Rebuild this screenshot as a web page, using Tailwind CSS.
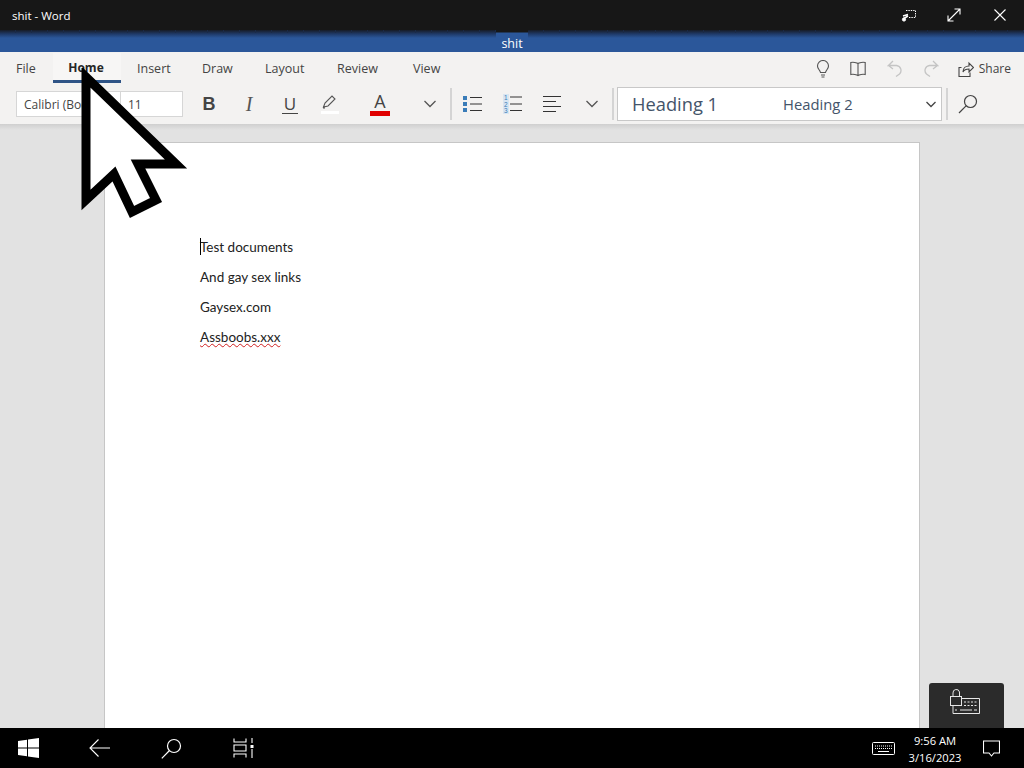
<!DOCTYPE html>
<html lang="en">
<head>
  <meta charset="UTF-8">
  <title>shit - Word</title>
  <script src="https://cdn.jsdelivr.net/npm/@tailwindcss/browser@4"></script>
</head>
<body class="w-[1024px] h-[768px] overflow-hidden relative font-['Open_Sans',sans-serif] bg-[#e2e2e2]">
<div class="flex flex-col h-[768px]">
  <!-- title bar -->
  <div class="h-[30px] shrink-0 bg-[#171717] flex items-center pl-[12px] text-white">
    <span class="text-[11.5px] leading-none pt-[1px]">shit - Word</span>
    <div class="ml-auto flex items-center">
      <svg class="w-[16px] h-[16px] mr-[30px]" viewBox="0 0 16 16" fill="none" stroke="#fff"><path d="M5 3.500h9.500v7H8" stroke-dasharray="1.400 1"/><path d="M2 9l5-1.500M2 12l5-3" stroke-width="1.500"/><circle cx="3" cy="12.500" r="1.600" fill="#fff"/></svg>
      <svg class="w-[14px] h-[14px] mr-[33px]" viewBox="0 0 14 14" fill="none" stroke="#fff" stroke-width="1.100"><path d="M1 13L13 1M7.500 1H13V6.500M1 7.500V13H6.500"/></svg>
      <svg class="w-[12px] h-[12px] mr-[18px]" viewBox="0 0 12 12" fill="none" stroke="#fff" stroke-width="1.100"><path d="M.5.5l11 11M11.500.5l-11 11"/></svg>
    </div>
  </div>
  <!-- doc name strip -->
  <div class="h-[22px] shrink-0 flex">
    <div class="flex-1 bg-[repeating-linear-gradient(90deg,transparent_0,transparent_15px,#1a2a47_15px,#1a2a47_16px),linear-gradient(#171c26_0px,#1f3a68_4px,#2b579a_8px)] bg-[length:auto_3px,auto] bg-no-repeat"></div>
    <div class="w-[32px] bg-[linear-gradient(#171717_2px,#2b579a_3px)] flex justify-center items-end">
      <span class="text-[12.5px] leading-[17px] text-white">shit</span>
    </div>
    <div class="flex-1 bg-[repeating-linear-gradient(90deg,transparent_0,transparent_15px,#1a2a47_15px,#1a2a47_16px),linear-gradient(#171c26_0px,#1f3a68_4px,#2b579a_8px)] bg-[length:auto_3px,auto] bg-no-repeat"></div>
  </div>
  <!-- tabs -->
  <div class="h-[32px] shrink-0 bg-[#f3f2f1] flex items-stretch text-[12.5px] text-[#444] relative">
    <div class="flex items-center pl-[16px] pt-[2px]">
      <span class="w-[37px]">File</span>
      <span class="w-[68px] h-full -mt-[2px] flex items-center justify-center font-bold text-[#262626] text-[12px] bg-[#f7f6f5] border-b-[3px] border-[#2f5486] pt-[3px] pr-[2px]">Home</span>
      <span class="ml-[16px] w-[52px]">Insert</span>
      <span class="ml-[13px] w-[47px]">Draw</span>
      <span class="ml-[16px] w-[58px]">Layout</span>
      <span class="ml-[14px] w-[62px]">Review</span>
      <span class="ml-[14px]">View</span>
    </div>
    <div class="ml-auto flex items-center pr-[13px] pt-[1px]">
      <svg class="w-[16px] h-[18px] mr-[19px]" viewBox="0 0 16 18" fill="none" stroke="#555" stroke-width="1.100"><path d="M5.500 12.500C5 10 2.500 9 2.500 6a5.500 5.500 0 0 1 11 0c0 3-2.500 4-3 6.500zM6 15h4M6.500 17h3"/></svg>
      <svg class="w-[16px] h-[16px] mr-[21px]" viewBox="0 0 16 16" fill="none" stroke="#555" stroke-width="1.100"><path d="M8 2.500C7 1.500 3 1 .8 1.500v12C3 13 7 13.500 8 14.500c1-1 5-1.500 7.200-1V1.500C13 1 9 1.500 8 2.500zM8 2.500v12"/></svg>
      <svg class="w-[16px] h-[17px] mr-[20px]" viewBox="0 0 16 17" fill="none" stroke="#c4c4c4" stroke-width="1.300"><path d="M6 1L1.500 5.500h8a5 5 0 0 1 3 8.500L9 16.500M1.500 5.500L6 9"/></svg>
      <svg class="w-[16px] h-[17px] mr-[19px]" viewBox="0 0 16 17" fill="none" stroke="#c4c4c4" stroke-width="1.300"><path d="M10 1l4.500 4.500h-8a5 5 0 0 0-3 8.500L7 16.500M14.500 5.500L10 9"/></svg>
      <svg class="w-[16px] h-[16px] mr-[5px]" viewBox="0 0 16 16" fill="none" stroke="#444" stroke-width="1.100"><path d="M3.500 6.500H1v9h11v-4M5 11c0-4 3-6 6-6V2l4.500 4.500L11 11V8c-3 0-5 1-6 3z"/></svg>
      <span class="text-[12px]">Share</span>
    </div>
  </div>
  <!-- toolbar -->
  <div class="h-[40px] shrink-0 bg-[#f3f2f1] flex items-center pl-[16px]">
    <div class="w-[105px] h-[26px] bg-white border border-[#d6d6d6] text-[12px] text-[#444] pl-[7px] leading-[25px] overflow-hidden whitespace-nowrap">Calibri (Body)</div>
    <div class="w-[62px] h-[26px] bg-white border border-l-0 border-[#d6d6d6] text-[12px] text-[#444] pl-[7px] leading-[25px]">11</div>
    <span class="ml-[19px] w-[14px] text-center font-bold text-[18px] text-[#444] leading-none font-['Liberation_Sans',sans-serif]">B</span>
    <span class="ml-[26px] w-[14px] text-center text-[20px] text-[#555] leading-none font-['Liberation_Serif',serif] italic">I</span>
    <span class="ml-[26px] w-[16px] text-center text-[17px] text-[#444] leading-[19px] border-b border-[#444]">U</span>
    <svg class="ml-[23px] w-[18px] h-[20px]" viewBox="0 0 18 20" fill="none" stroke="#555" stroke-width="1.100"><path d="M2.500 13l1.500-4L11 2l3 3-7 7zM2 14l2 0"/><rect x="0" y="17" width="18" height="3" fill="#fff" stroke="none"/></svg>
    <div class="ml-[31px] w-[20px] flex flex-col items-center">
      <span class="text-[18px] leading-[17px] text-[#444]">A</span>
      <span class="w-[20px] h-[5px] bg-[#e00000] mt-[1px]"></span>
    </div>
    <svg class="ml-[34px] w-[12px] h-[8px]" viewBox="0 0 12 8" fill="none" stroke="#555" stroke-width="1.300"><path d="M.5 1l5.500 5.500L11.500 1"/></svg>
    <div class="ml-[14px] w-[2px] h-[32px] bg-[#d4d4d4]"></div>
    <!-- bullets -->
    <svg class="ml-[11px] w-[19px] h-[18px]" viewBox="0 0 19 18"><g fill="#3a7cb8"><rect y="1" width="4" height="4"/><rect y="7" width="4" height="4"/><rect y="13" width="4" height="4"/></g><path d="M7 2.500h12M7 9h12M7 15.500h12" stroke="#333" stroke-width="1"/></svg>
    <svg class="ml-[21px] w-[19px] h-[20px]" viewBox="0 0 19 20"><rect width="6" height="20" fill="#d9e6f2"/><path d="M7 3h12M7 10h12M7 16.500h12" stroke="#333" stroke-width="1"/><text x="1" y="6" font-size="6.500" fill="#3a7cb8" font-family="Liberation Sans">1</text><text x="1" y="12.500" font-size="6.500" fill="#3a7cb8" font-family="Liberation Sans">2</text><text x="1" y="19" font-size="6.500" fill="#3a7cb8" font-family="Liberation Sans">3</text></svg>
    <svg class="ml-[21px] w-[18px] h-[18px]" viewBox="0 0 18 18"><path d="M0 1.500h18M0 6.500h13M0 11.500h18M0 16.500h13" stroke="#333" stroke-width="1"/></svg>
    <svg class="ml-[25px] w-[12px] h-[8px]" viewBox="0 0 12 8" fill="none" stroke="#555" stroke-width="1.300"><path d="M.5 1l5.500 5.500L11.500 1"/></svg>
    <div class="ml-[14px] w-[2px] h-[32px] bg-[#d4d4d4]"></div>
    <!-- styles gallery -->
    <div class="ml-[3px] w-[325px] h-[34px] bg-white border border-[#c8c8c8] flex items-center text-[#44546a]">
      <span class="ml-[14px] text-[18.300px] leading-none">Heading 1</span>
      <span class="ml-[65px] text-[14.800px] leading-none">Heading 2</span>
      <svg class="ml-auto mr-[5px] w-[10px] h-[7px]" viewBox="0 0 10 7" fill="none" stroke="#444" stroke-width="1.300"><path d="M.5 1L5 5.500 9.500 1"/></svg>
    </div>
    <div class="ml-[4px] w-[2px] h-[32px] bg-[#d4d4d4]"></div>
    <svg class="ml-[10px] w-[20px] h-[20px]" viewBox="0 0 20 20" fill="none" stroke="#444" stroke-width="1.200"><circle cx="12.500" cy="7.500" r="6"/><path d="M8.300 11.700L1 19"/></svg>
  </div>
  <!-- ribbon shadow -->
  <div class="h-[6px] shrink-0 bg-[linear-gradient(#cfcfcf,#e2e2e2)]"></div>
  <!-- canvas -->
  <div class="flex-1 min-h-0 bg-[#e2e2e2] pl-[104px] pt-[12px] overflow-hidden">
    <div class="w-[816px] h-[700px] bg-white border border-[#c6c6c6] pl-[95px] pt-[94px] text-[13.500px] leading-[20px] text-[#222] font-['Lato',sans-serif]">
      <div class="relative mb-[10px]">Test documents<span class="absolute left-0 top-[1px] w-px h-[17px] bg-black"></span></div>
      <div class="mb-[10px]">And gay sex links</div>
      <div class="mb-[10px]">Gaysex.com</div>
      <div><span class="underline decoration-wavy decoration-[#d02020] decoration-1">Assboobs.xxx</span></div>
    </div>
  </div>
  <!-- taskbar -->
  <div class="h-[40px] shrink-0 bg-black flex items-center text-white relative">
    <svg class="ml-[18px] w-[21px] h-[20px]" viewBox="0 0 21 20" fill="#fff"><path d="M0 3l9-1.300V9.500H0zM10 1.500L21 0v9.500H10zM0 10.500h9v7.800L0 17zM10 10.500h11V20l-11-1.500z"/></svg>
    <svg class="ml-[50px] w-[21px] h-[18px]" viewBox="0 0 21 18" fill="none" stroke="#fff" stroke-width="1.100"><path d="M21 9H1M9.500.5L1 9l8.500 8.500"/></svg>
    <svg class="ml-[51px] w-[21px] h-[21px]" viewBox="0 0 21 21" fill="none" stroke="#fff" stroke-width="1.200"><circle cx="13" cy="8" r="6.500"/><path d="M8.500 12.500L.8 20.300"/></svg>
    <svg class="ml-[51px] w-[21px] h-[20px]" viewBox="0 0 21 20" fill="none" stroke="#fff" stroke-width="1.100"><path d="M1 .5v3.500h12V.5M1 19.500V16h12v3.500M1 7h12v6H1zM19 0v5M19 11v9"/><rect x="17.500" y="7" width="3" height="3" fill="#fff" stroke="none"/></svg>
    <svg class="ml-[618px] w-[23px] h-[13px]" viewBox="0 0 23 13" fill="none" stroke="#fff"><rect x=".5" y=".5" width="22" height="12" rx="1"/><path d="M3 4h17M3 6.500h17" stroke-dasharray="1 1"/><path d="M6 9.500h11"/></svg>
    <div class="ml-[7px] w-[66px] text-center text-[11.200px] leading-[17px] pt-[1px]">9:56 AM<br>3/16/2023</div>
    <svg class="ml-[15px] w-[17px] h-[17px]" viewBox="0 0 17 17" fill="none" stroke="#fff" stroke-width="1.100"><path d="M.5 1h16v12h-5.500l-2.500 3-2.500-3H.5z"/></svg>
  </div>
</div>
<!-- floating keyboard button -->
<div class="absolute left-[929px] top-[683px] w-[75px] h-[45px] bg-[#2b2b2b] rounded-t-[3px]">
  <svg class="absolute left-[21px] top-[6px] w-[32px] h-[25px]" viewBox="0 0 32 25" fill="none" stroke="#e6e6e6"><rect x=".5" y="7.500" width="11" height="9"/><path d="M3 7.500V4a3.300 3.300 0 0 1 6.500-1v4.500"/><path d="M11.500 9.500H29.500v15H3v-8"/><path d="M14 13h13M14 16.500h13" stroke-dasharray="2 1.500"/><path d="M5 21h2M10 21h12M24 21h3"/></svg>
</div>
<!-- big mouse pointer -->
<svg class="absolute left-[80px] top-[68px] w-[108px] h-[152px]" viewBox="0 0 108 152"><path d="M6 9V132L34 106L52 144L76 132L58 96H96Z" fill="#fff" stroke="#000" stroke-width="9"/></svg>
</body>
</html>
